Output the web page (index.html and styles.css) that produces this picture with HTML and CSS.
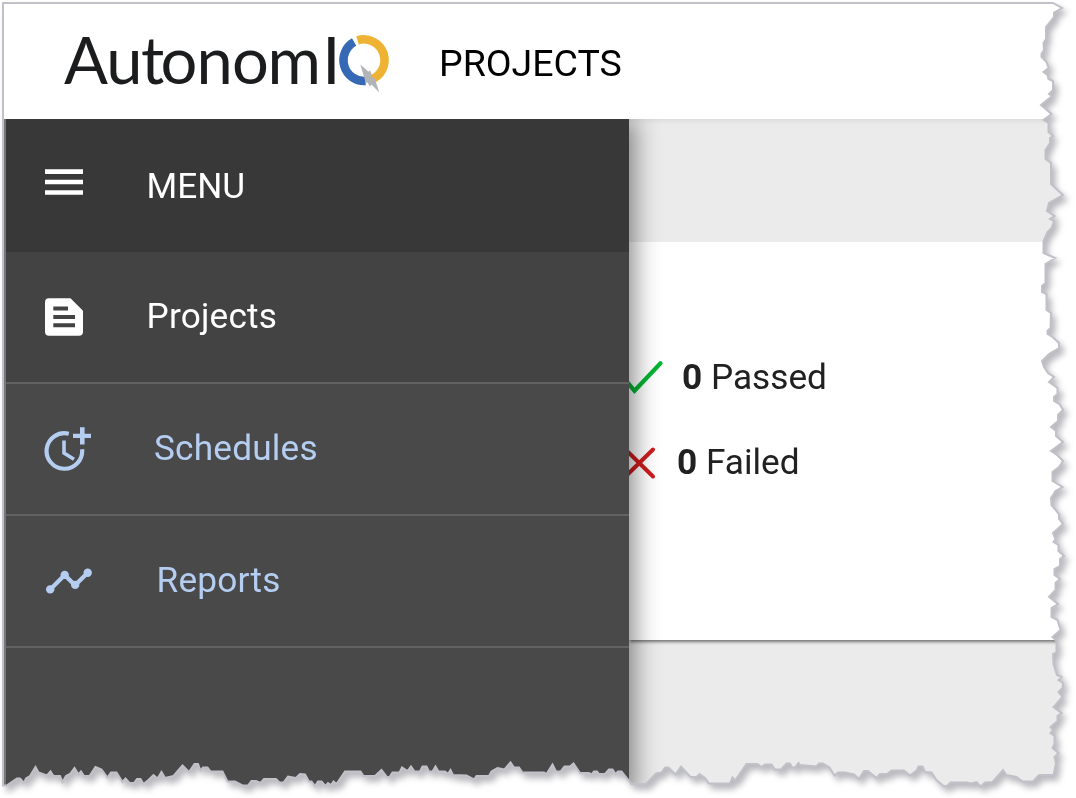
FILE: index.html
```
<!DOCTYPE html>
<html lang="en">
<head>
<meta charset="utf-8">
<title>AutonomIQ – Projects</title>
<link rel="stylesheet" href="styles.css">
</head>
<body>
<div class="sheet">
  <div class="paper">
    <header class="topbar">
      <svg class="logo" width="328" height="90" viewBox="63 20 328 90" role="img" aria-label="AutonomIQ">
        <text class="logo-text" x="64 106.300 141 160.500 196.500 232 267.500 322.300" y="84">AutonomI</text>
        <g transform="translate(-1.500 0.700)">
          <path d="M355.600 41.400A20.800 20.800 0 0 0 367 80.300" fill="none" stroke="#3568b5" stroke-width="8.600"/>
          <path d="M359 39.600A20.800 20.800 0 0 1 371.500 79.300" fill="none" stroke="#efb334" stroke-width="8.600"/>
          <path d="M361.800 63.800L370 71.100L371.500 69.600L374.500 77.800L376 77.100L380.800 91.800L373 83.800L371.300 85.800L369 81.800L367.300 82.100Z" fill="#b1b3b6"/>
        </g>
      </svg>
      <h1 class="title">PROJECTS</h1>
    </header>
    <div class="body">
      <nav class="menu">
        <div class="item item-head">
          <svg class="icon" width="48" height="48" viewBox="0 0 48 48"><path d="M1 7.300h38v4.700H1zM1 17.800h38v4.400H1zM1 28.300h38v4.500H1z" fill="currentColor"/></svg>
          <span class="label label-menu">MENU</span>
        </div>
        <div class="item item-active">
          <svg class="icon" width="48" height="48" viewBox="0 -0.700 48 48"><path fill="currentColor" fill-rule="evenodd" d="M5 4.500H26.500L39 17V38Q39 42 35 42H5Q1 42 1 38V8.500Q1 4.500 5 4.500ZM9.300 12.800V16.800H24V12.800ZM9.300 21.200V25.200H31V21.200ZM9.300 29.500V33.500H31V29.500Z"/></svg>
          <span class="label label-projects">Projects</span>
        </div>
        <div class="item">
          <svg class="icon" width="48" height="48" viewBox="0 -1.300 48 48"><path d="M24.800 7.400A17.800 17.800 0 1 0 38.100 23" fill="none" stroke="currentColor" stroke-width="4.200"/><path d="M20 14.200V26.800L30 33" fill="none" stroke="currentColor" stroke-width="3.600"/><path d="M36 1h4.600v6.500H47v4.300h-6.400v6.500H36v-6.500h-7V7.500h7z" fill="currentColor"/></svg>
          <span class="label label-schedules">Schedules</span>
        </div>
        <div class="item">
          <svg class="icon" width="48" height="48" viewBox="0 0.900 48 48"><path d="M6.200 33.300L20.700 18.800L31 29.200L43.700 16.600" fill="none" stroke="currentColor" stroke-width="4.200"/><g fill="currentColor"><circle cx="6.200" cy="33.300" r="4.200"/><circle cx="20.700" cy="18.800" r="4.200"/><circle cx="31.200" cy="28.800" r="4.200"/><circle cx="43.700" cy="16.600" r="4.200"/></g></svg>
          <span class="label label-reports">Reports</span>
        </div>
      </nav>
      <main class="content">
        <section class="card">
          <div class="stat">
            <svg class="mark" width="36" height="40" viewBox="0 -1.800 36 40"><path d="M-2 22L5.500 31L31.500 3.500" fill="none" stroke="#03b532" stroke-width="4.200" stroke-linecap="round"/></svg>
            <p class="count count-passed"><b>0</b> Passed</p>
          </div>
          <div class="stat stat-failed">
            <svg class="mark" width="36" height="40" viewBox="0 2 36 40"><path d="M-3.500 8.500L24 35.500M24 8.500L-3.500 35.500" fill="none" stroke="#d01c1c" stroke-width="4" stroke-linecap="round"/></svg>
            <p class="count count-failed"><b>0</b> Failed</p>
          </div>
        </section>
      </main>
    </div>
  </div>
  <svg class="outline" width="1076" height="798" viewBox="0 0 1076 798">
    <defs>
      <path id="edge" d="M3 3H1053L1062 8L1054 12.500V17L1046 27V39L1043.500 43L1044 50L1041.500 54V57L1046.500 62L1048.500 68L1043.500 72L1047.500 75L1048.500 79L1053 81V90L1049 94L1052 96L1041 105L1051.500 114L1043.500 120L1048.500 123V132L1053 136L1050 138V143L1045.500 150V159L1051 163V184L1063 195L1049 203L1047 211L1054.500 216L1050 219L1054 221L1051.500 228L1047.500 232L1043.500 241V253L1055 258L1045.500 264V283L1042 286V292L1046.500 294V310L1051 313L1050.500 328L1047.500 331V334L1052.500 337L1059 343V348L1049 354L1042 361L1044 367L1048 373L1054 377L1049 382L1057.500 388V394L1054 397V401L1059.500 404L1063 410L1058 415V421L1051 427L1056 431V436L1063 442L1051 451L1057 455L1063 461L1059 467L1052.500 472V481L1062.500 487L1055.500 491L1051 498L1051.500 505L1059 514V519L1063 524L1053 533L1055.500 539L1053.500 542L1058.500 545V551L1064 556L1060 559V566L1054.500 569V575L1060 579L1055.500 583V590L1049 597L1058 604L1051.500 608V617L1057.500 620L1060.500 630L1052.500 637L1056.500 641V652L1053 654L1053.500 664L1057 675L1061.500 677L1058.500 680L1063 683L1062.500 688L1058.500 692L1062.500 697L1053.500 707L1061.500 713L1057.500 716V721L1050.500 727L1053 730L1050.500 733L1054.500 736V744L1052.500 748L1058.500 753L1054.500 757L1056 763L1053.500 775H1039L1033 781.500H1022.500L1016.500 777L1006.500 775L1003 770L992.500 782L985 782.500L980.500 786.500L976.500 782L970.500 783.500L966.500 782.500H950.500L947 786H943.500L936.500 780L931.500 772.500L925 772L922.500 766.500H918.500L916.500 770.500L910 775.500L904 770.500H891.500L887 774H880L876.500 778L868 771H864L859 779L854 774.500L845 772.500H838L834.500 775.500L829.500 767.500L823 763.500H819L816.500 766.500L800 765L798.500 763L795 767.500H792L790 763.500H786.500L781 769.500H775L771.500 764.500H765L761.500 767L757.500 764H746.500L735 780.500L732.500 777.500L730 783.500H709L705 778L699.500 774L696.500 777H690.500L681 766.500L675.500 774.500L668.500 767.500H665L661.500 772.500L656 773.500L646 784H631.500L625 776L621.500 771.500H618L615.500 774L612.500 769.500H609L605 774H599L597 771.500H594L591.500 774.500L589 773H580L573.500 763.500L570 766.500H564.500L560.500 771.500H556L552.500 764.500L546.500 774L544 772.500H522.500L519 767.500H514L510.500 762.500L504.500 769.500L497.500 768L491.500 771.500L489 776H476.500L474 779.500L466.500 775.500L453 775L450.500 770L448 774L445 771.500H438.500L435.500 766.500L432.500 771.500H429L426.500 766.500H422.500L420 771.500H414.500L411 766.500L407.500 771L402 767.500L399.500 772.500H392.500L389.500 777H387L381.500 770L375 776H363.500L360.500 771.500H345L336.500 784L333.500 781.500L331 785L328 783L325.500 786L321.500 781.500H318L315 786L311.500 781.500H309L305 774.500L300 774L296 778L288 776.500L283.500 782.500H279.500L276 779H264L260.500 783L256 781H251.500L248 785.500H242.500L235 781.500H227.500L222.500 771.500H210.500L207.500 767.500H203L200.500 770.500L198 764H194.500L189 772L182.500 765.500L173.500 776L165 778L161.500 772L157.500 778.500L153.500 775L149 779.500L143.500 784L140.500 779H137L134 783H129.500L125.500 778.500L122.500 782L116.500 772.500H111L107.500 777.500L101.500 769.500L95.500 767L89.500 776H84L81 771.500L78.500 774.500L74.500 768L70 774L66 776L62.500 782L60 776H53.500L50.500 771.500L47 775.500L38.500 772.500L35.500 767L30 776L26 778.500L24 783L20 778.500H17L12.500 781.500L6.500 785.500H3Z"/>
      <clipPath id="torn"><use href="#edge"/></clipPath>
    </defs>
    <use href="#edge" fill="none" stroke="#c1c2c9" stroke-width="2"/>
  </svg>
</div>
</body>
</html>
```

FILE: styles.css
```
* { box-sizing: border-box; }

body {
  margin: 0;
  background: #fff;
  font-family: Roboto, "Liberation Sans", sans-serif;
  overflow: hidden;
}

.sheet {
  position: relative;
  width: 1076px;
  height: 798px;
  filter: drop-shadow(4px 5px 3px rgba(60, 62, 75, 0.36));
}

.paper {
  display: flex;
  flex-direction: column;
  height: 798px;
  padding: 4px 0 0 4px;
  background: #fff;
  clip-path: url(#torn);
}

/* Outline of the torn page, laid over its content */
.outline {
  position: absolute;
  inset: 0;
  pointer-events: none;
}

.topbar {
  display: flex;
  align-items: flex-start;
  height: 115px;
  padding: 16px 0 0 59px;
}

.logo { flex: none; overflow: visible; }

.logo-text {
  font-family: Lato, sans-serif;
  font-size: 65px;
  fill: #1b1c1d;
}

.title {
  margin: 21px 0 0 48px;
  font-size: 37.5px;
  font-weight: 400;
  line-height: 44px;
  color: #000;
}

.body {
  display: flex;
  flex: 1;
  border-left: 2px solid #777;
}

.menu {
  position: relative;
  z-index: 1;
  width: 623px;
  background: #494949;
  box-shadow: 5px 0 24px rgba(0, 0, 0, 0.48);
  clip-path: inset(0 -60px 0 0);
}

.item {
  display: flex;
  align-items: center;
  height: 132px;
  padding-left: 38px;
  border-bottom: 2px solid #626262;
  color: #b5cdf1;
}

.item-head {
  height: 133px;
  border: 0;
  background: #383838;
  color: #fff;
}

.item-active {
  background: #434343;
  color: #fff;
}

.icon { flex: none; }

.label {
  padding-bottom: 2px;
  font-size: 35.2px;
  line-height: 44px;
  letter-spacing: 0.2px;
}

.label-menu { margin-left: 54.5px; padding-bottom: 0; letter-spacing: 0; }
.label-projects { margin-left: 54.5px; }
.label-schedules { margin-left: 62px; }
.label-reports { margin-left: 64.5px; }

.content {
  flex: 1;
  padding-top: 123px;
  background: linear-gradient(#dedede, #ebebeb 6px);
}

.card {
  height: 398px;
  padding-top: 114px;
  background: #fff;
  box-shadow: 0 3px 3px -1px rgba(0, 0, 0, 0.5);
}

.stat {
  display: flex;
  align-items: center;
  height: 44px;
}

.stat-failed { margin-top: 41px; }

.mark { flex: none; overflow: visible; }

.count {
  margin: 0;
  padding-bottom: 2px;
  font-size: 35.2px;
  line-height: 44px;
  color: #212121;
}

.count-passed { margin-left: 17px; }
.count-failed { margin-left: 12px; }
```
